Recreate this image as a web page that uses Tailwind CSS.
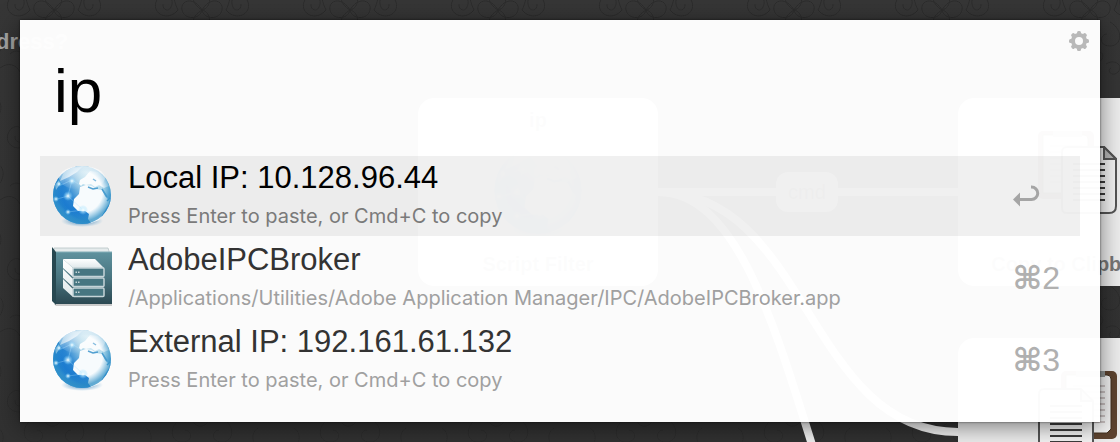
<!DOCTYPE html>
<html lang="en">
<head>
<meta charset="utf-8">
<meta name="viewport" content="width=device-width, initial-scale=1">
<title>Launcher</title>
<script src="https://cdn.jsdelivr.net/npm/@tailwindcss/browser@4"></script>
</head>
<body class="relative min-h-screen overflow-hidden bg-[#313131] font-['Liberation_Sans',Arial,sans-serif]">

<!-- shared drawings -->
<svg class="absolute h-0 w-0" aria-hidden="true">
  <defs>
    <radialGradient id="sea" cx="0.75" cy="0.2" r="0.9">
      <stop offset="0" stop-color="#e9f6fb"/><stop offset="0.3" stop-color="#a5d3e8"/><stop offset="0.62" stop-color="#2a86d2"/><stop offset="0.85" stop-color="#1677cf"/><stop offset="1" stop-color="#3d9be0"/>
    </radialGradient>
    <linearGradient id="gloss" x1="0" y1="0" x2="0" y2="1">
      <stop offset="0" stop-color="#fff" stop-opacity="0.75"/><stop offset="1" stop-color="#fff" stop-opacity="0"/>
    </linearGradient>
    <radialGradient id="rim" cx="0.5" cy="0.45" r="0.5">
      <stop offset="0.7" stop-color="#3c9bd0" stop-opacity="0"/><stop offset="1" stop-color="#2f8fc4" stop-opacity="0.75"/>
    </radialGradient>
    <radialGradient id="spark"><stop offset="0" stop-color="#fff"/><stop offset="0.3" stop-color="#d4f3ff" stop-opacity="0.7"/><stop offset="1" stop-color="#7fd4ff" stop-opacity="0"/></radialGradient>
    <radialGradient id="under"><stop offset="0" stop-color="#0f5590" stop-opacity="0.9"/><stop offset="1" stop-color="#4a9bd0" stop-opacity="0"/></radialGradient>
    <linearGradient id="teal" x1="0" y1="0" x2="0" y2="1"><stop offset="0" stop-color="#5f929e"/><stop offset="0.5" stop-color="#48747f"/><stop offset="1" stop-color="#2b4852"/></linearGradient>
    <linearGradient id="paper" x1="0" y1="0" x2="0" y2="1"><stop offset="0" stop-color="#fff"/><stop offset="1" stop-color="#dfe8ea"/></linearGradient>
    <pattern id="damask" width="148" height="132" patternUnits="userSpaceOnUse" x="-20" y="-56">
      <g fill="none" stroke="#2b2b2b" stroke-width="1">
        <path d="M74 66c-8-14-22-10-20 0s18 10 20 0c8-14 22-10 20 0s-18 10-20 0c-14-8-10-22 0-20s10 18 0 20c-14 8-10 22 0 20s10-18 0-20"/>
        <path d="M50 66c-10 12-26 4-22-8s18-8 16 2-10 6-9 0M98 66c10 12 26 4 22-8s-18-8-16 2 10 6 9 0M50 66c-8-16-4-30 8-32s12 12 4 12M98 66c8-16 4-30-8-32s-12 12-4 12M54 78c-14 8-12 24 0 24s10-12 3-12M94 78c14 8 12 24 0 24s-10-12-3-12"/>
        <path d="M0 4c14-4 20 8 12 14S-2 14 6 8M148 4c-14-4-20 8-12 14s14-4 6-10M12 18c10 4 12 18 4 24M136 18c-10 4-12 18-4 24M0 128c14 4 20-8 12-14s-14 4-6 10M148 128c-14 4-20-8-12-14s14 4 6 10M12 114c10-4 16-20 6-26M136 114c-10-4-16-20-6-26"/>
        <path d="M74 112c-6-8-16-4-12 3s12 3 12-3c6-8 16-4 12 3s-12 3-12-3M58 120c-9-6-18 2-12 8s12-2 7-4M90 120c9-6 18 2 12 8s-12-2-7-4M74 126c-6-6-12 0-8 4M74 126c6-6 12 0 8 4M20 124c8-6 16-4 20 4M128 124c-8-6-16-4-20 4M30 110c6-6 14-2 12 4M118 110c-6-6-14-2-12 4"/>
      </g>
    </pattern>
    <linearGradient id="ground" x1="0" y1="0" x2="0" y2="1"><stop offset="0" stop-color="#363636"/><stop offset="1" stop-color="#313131"/></linearGradient>
    <symbol id="globe" viewBox="0 0 64 64">
      <ellipse cx="32" cy="57" rx="21" ry="6" fill="url(#under)"/>
      <circle cx="32" cy="31" r="29" fill="url(#sea)"/>
      <g fill="#f7fbfd">
        <path d="M30 23l6-2 6 1 4 3 6 1 3 6 3 3 2-1-1 6-5 8-5 8-8 3-3-4 1-5-4-3-7 0-5-5 1-7 5-5z"/>
        <path d="M29 20l1-4 5-3 5-6 8 1 8 7 3 7-5 2-5-3-4 2-4-3-5 1-3-1-2 2z"/>
        <path d="M14 8l8-4 10-1-5 5-8 5-9 4zM5 21l4-5 1 4-4 6z" opacity="0.7"/>
      </g>
      <path d="M52 25l5 8M43 15l3 2M38 23l5 2 5-1M57 37l3-3" fill="none" stroke="#4d9ed0" stroke-width="1.5"/>
      <path d="M11 21l11-5 8 5M18 32l-11 3M18 32l4-16M18 32l15 14M18 48l15-2" stroke="#aadfff" stroke-opacity="0.35" fill="none"/>
      <circle cx="32" cy="31" r="29" fill="url(#rim)"/>
      <ellipse cx="32" cy="14" rx="23" ry="12" fill="url(#gloss)"/>
      <g fill="url(#spark)"><circle cx="18" cy="32" r="5"/><circle cx="33" cy="46" r="5"/><circle cx="22" cy="17" r="4"/><circle cx="18" cy="48" r="3"/><circle cx="9" cy="20" r="3"/><circle cx="6" cy="35" r="3"/></g>
    </symbol>
    <symbol id="sheet" viewBox="0 0 56 68">
      <path d="M6 1h37l12 12v47q0 7-7 7H6q-5 0-5-5V6q0-5 5-5z" fill="#f4f4f4" stroke="#555" stroke-width="2"/>
      <path d="M43 1v12h12z" fill="#b5b5b5" stroke="#555" stroke-width="2"/>
      <path d="M12 18h32M12 24h32M12 30h32M12 36h32M12 42h32M12 48h32M12 54h32" stroke="#3c3c3c" stroke-width="2"/>
    </symbol>
    <symbol id="clipboard" viewBox="0 0 56 68">
      <rect width="56" height="68" rx="5" fill="#5d432f"/>
      <path d="M5 4h41q4 0 4 4v50l-4 4H5z" fill="#f3f3f3" stroke="#42301f"/>
      <path d="M12 15h32M12 21h32M12 27h32M12 33h32M12 39h32M12 45h32M12 51h32" stroke="#c9c1c1" stroke-width="2"/>
      <path d="M15-2h29v8H15z" fill="#8e9392"/>
    </symbol>
  </defs>
</svg>

<!-- workflow canvas behind the launcher -->
<div class="absolute inset-0 overflow-hidden" aria-hidden="true">
  <svg class="absolute inset-0 h-full w-full">
    <rect width="100%" height="100%" fill="url(#ground)"/>
    <rect width="100%" height="100%" fill="url(#damask)"/>
    <g fill="none" stroke="#f0f0f0" stroke-width="8">
      <path d="M658 192H958"/>
      <path d="M658 192C808 192 808 432 958 432"/>
      <path d="M658 192C808 192 808 672 958 672"/>
    </g>
  </svg>
  <p class="absolute -left-1 top-7 text-[22px] leading-7 font-bold text-[#a3a3a3]">dress?</p>
  <div class="absolute left-[418px] top-[98px] flex h-[188px] w-60 flex-col items-center justify-between rounded-2xl bg-[#ededed] py-2 text-xl font-bold text-[#777]">
    <span>ip</span>
    <svg class="size-24 opacity-60"><use href="#globe"/></svg>
    <span>Script Filter</span>
  </div>
  <div class="absolute left-[776px] top-[172px] flex h-10 w-[62px] items-center justify-center rounded-xl bg-[#ededed] text-xl text-[#777]">cmd</div>
  <div class="absolute left-[958px] top-[98px] flex h-[188px] w-60 flex-col items-center justify-end rounded-2xl bg-[#ededed] py-2 text-xl font-bold text-[#777]">
    <svg class="absolute left-20 top-[33px] h-[68px] w-14"><use href="#clipboard"/></svg>
    <svg class="absolute left-[103px] top-12 h-[68px] w-14"><use href="#sheet"/></svg>
    <span class="whitespace-nowrap">Copy to Clipboard</span>
  </div>
  <div class="absolute left-[958px] top-[338px] h-[188px] w-60 rounded-2xl bg-[#ededed]">
    <svg class="absolute left-[103px] top-[33px] h-[68px] w-14 overflow-visible"><use href="#clipboard"/></svg>
    <svg class="absolute left-20 top-[50px] h-[68px] w-14"><use href="#sheet"/></svg>
  </div>
</div>

<main class="relative p-5">
  <section class="relative bg-white/98 px-5 pt-7 pb-[22px] shadow-[0_4px_22px_rgba(0,0,0,0.5),0_0_2px_rgba(0,0,0,0.6)]">
    <button type="button" aria-label="Preferences" class="absolute right-[11px] top-[11px] size-5">
      <svg viewBox="0 0 20 20" class="size-5">
        <g fill="#b9b9b9"><path fill-rule="evenodd" d="M10 2a8 8 0 1 0 0 16a8 8 0 0 0 0-16zM10 6a4 4 0 1 1 0 8a4 4 0 0 1 0-8z"/>
        <g id="teeth"><rect x="8" y="0" width="4" height="4" rx="1.500"/><rect x="8" y="16" width="4" height="4" rx="1.500"/><rect y="8" x="0" height="4" width="4" rx="1.500"/><rect y="8" x="16" height="4" width="4" rx="1.500"/></g>
        <use href="#teeth" transform="rotate(45 10 10)"/></g>
      </svg>
    </button>
    <label for="query" class="sr-only">Search</label>
    <input id="query" type="text" value="ip" autocomplete="off" class="block h-[84px] w-full bg-transparent pl-3.5 text-[62px] text-black outline-none">

    <ul class="mt-6 flex flex-col gap-0.5">
      <li class="flex h-20 items-center bg-black/6 pl-[10px] pr-5">
        <svg class="size-16 shrink-0" aria-hidden="true"><use href="#globe"/></svg>
        <div class="ml-3.5 min-w-0 flex-1 text-black">
          <h2 class="truncate text-[31px] leading-10">Local IP: 10.128.96.44</h2>
          <p class="truncate font-['Inter',sans-serif] text-[20px] leading-9 text-[#7a7a7a]">Press Enter to paste, or Cmd+C to copy</p>
        </div>
        <svg class="mr-5 h-[22px] w-7" viewBox="0 0 28 22" role="img" aria-label="Return"><path d="M1 14.500L8 7.500v14z" fill="#a5a5a5"/><path d="M6 14.500h13.500a6 6 0 0 0 0-12.500H19" fill="none" stroke="#a5a5a5" stroke-width="3"/></svg>
      </li>
      <li class="flex h-20 items-center pl-[10px] pr-5">
        <svg class="size-16 shrink-0" viewBox="0 0 64 64" aria-hidden="true">
          <path d="M4 58h58v2H6z" fill="#999" opacity="0.5"/>
          <path d="M4 2h54l1 3v5H4z" fill="#e5ebec" stroke="#b8c4c7" stroke-width="0.800"/>
          <path d="M2 1l4 5v53l-4-4z" fill="#274851"/>
          <path d="M6 6h56v52H6z" fill="url(#teal)"/>
          <path d="M6 6h56" stroke="#82adb7"/>
          <path d="M13 13h32l9 9H23z" fill="url(#paper)"/>
          <path d="M13 13l10 9v9l-10-9zM13 23l10 10v8l-10-9zM13 33l10 10v8l-10-9z" fill="url(#paper)"/>
          <g fill="#477681" stroke="#c5d4d8" stroke-width="1.500"><rect x="23" y="22" width="31" height="8.500" rx="1"/><rect x="23" y="32" width="31" height="8.500" rx="1"/><rect x="23" y="42" width="31" height="8.500" rx="1"/></g>
          <g fill="#c5d4d8"><path d="M25.500 25.500h1.500v1.500h-1.500zM28 25.500h1.500v1.500H28zM25.500 35.500h1.500v1.500h-1.500zM28 35.500h1.500v1.500H28zM25.500 45.500h1.500v1.500h-1.500zM28 45.500h1.500v1.500H28z"/></g>
        </svg>
        <div class="ml-3.5 min-w-0 flex-1 text-[#333]">
          <h2 class="truncate text-[31px] leading-10">AdobeIPCBroker</h2>
          <p class="truncate font-['Inter',sans-serif] text-[20px] leading-9 text-[#a0a0a0]">/Applications/Utilities/Adobe Application Manager/IPC/AdobeIPCBroker.app</p>
        </div>
        <kbd class="font-['Liberation_Sans','DejaVu_Sans',sans-serif] text-[32px] leading-10 text-[#b0b0b0]"><span class="font-bold">⌘</span>2</kbd>
      </li>
      <li class="flex h-20 items-center pl-[10px] pr-5">
        <svg class="size-16 shrink-0" aria-hidden="true"><use href="#globe"/></svg>
        <div class="ml-3.5 min-w-0 flex-1 text-[#333]">
          <h2 class="truncate text-[31px] leading-10">External IP: 192.161.61.132</h2>
          <p class="truncate font-['Inter',sans-serif] text-[20px] leading-9 text-[#a0a0a0]">Press Enter to paste, or Cmd+C to copy</p>
        </div>
        <kbd class="font-['Liberation_Sans','DejaVu_Sans',sans-serif] text-[32px] leading-10 text-[#b0b0b0]"><span class="font-bold">⌘</span>3</kbd>
      </li>
    </ul>
  </section>
</main>
</body>
</html>
